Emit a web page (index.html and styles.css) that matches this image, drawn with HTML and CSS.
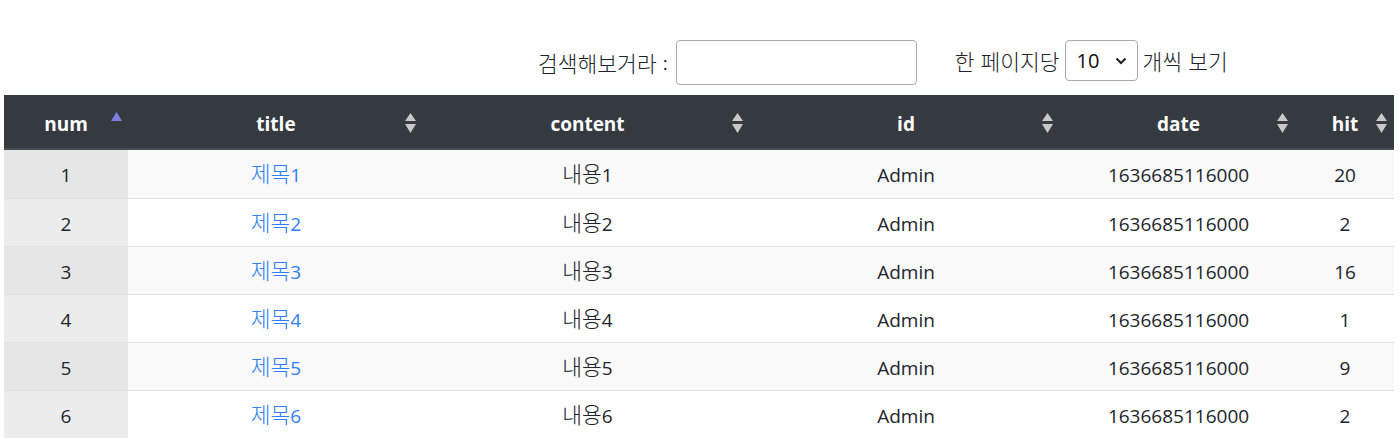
FILE: index.html
```html
<!DOCTYPE html>
<html lang="ko">
<head>
<meta charset="utf-8">
<title>게시판</title>
<link rel="stylesheet" href="styles.css">
</head>
<body>
<div class="page">
  <div class="controls">
    <label class="filter"><span class="ko">검색해보거라</span> : <input type="search" class="search-input"></label>
    <label class="length"><span class="ko">한 페이지당</span>
      <span class="select-box">10<svg class="chev" width="12" height="8" viewBox="0 0 12 8"><path d="M1.5 1.5 L6 6 L10.5 1.5" fill="none" stroke="#222" stroke-width="2"/></svg></span>
      <span class="ko">개씩 보기</span></label>
  </div>
  <table class="board">
    <colgroup>
      <col class="c-num"><col class="c-title"><col class="c-content"><col class="c-id"><col class="c-date"><col class="c-hit">
    </colgroup>
    <thead>
      <tr>
        <th class="asc">num<svg class="sort" width="11" height="20" viewBox="0 0 11 20"><polygon points="5.5,0 11,9 0,9" fill="#7b80dc"/></svg></th>
        <th>title<svg class="sort" width="11" height="21" viewBox="0 0 11 21"><polygon points="5.5,0 11,8 0,8" fill="#c8c8c8"/><polygon points="0,11 11,11 5.5,20" fill="#c8c8c8"/></svg></th>
        <th>content<svg class="sort" width="11" height="21" viewBox="0 0 11 21"><polygon points="5.5,0 11,8 0,8" fill="#c8c8c8"/><polygon points="0,11 11,11 5.5,20" fill="#c8c8c8"/></svg></th>
        <th>id<svg class="sort" width="11" height="21" viewBox="0 0 11 21"><polygon points="5.5,0 11,8 0,8" fill="#c8c8c8"/><polygon points="0,11 11,11 5.5,20" fill="#c8c8c8"/></svg></th>
        <th>date<svg class="sort" width="11" height="21" viewBox="0 0 11 21"><polygon points="5.5,0 11,8 0,8" fill="#c8c8c8"/><polygon points="0,11 11,11 5.5,20" fill="#c8c8c8"/></svg></th>
        <th>hit<svg class="sort" width="11" height="21" viewBox="0 0 11 21"><polygon points="5.5,0 11,8 0,8" fill="#c8c8c8"/><polygon points="0,11 11,11 5.5,20" fill="#c8c8c8"/></svg></th>
      </tr>
    </thead>
    <tbody>
      <tr><td class="sorted">1</td><td><a href="#"><span class="ko">제목</span>1</a></td><td><span class="ko">내용</span>1</td><td>Admin</td><td>1636685116000</td><td>20</td></tr>
      <tr><td class="sorted">2</td><td><a href="#"><span class="ko">제목</span>2</a></td><td><span class="ko">내용</span>2</td><td>Admin</td><td>1636685116000</td><td>2</td></tr>
      <tr><td class="sorted">3</td><td><a href="#"><span class="ko">제목</span>3</a></td><td><span class="ko">내용</span>3</td><td>Admin</td><td>1636685116000</td><td>16</td></tr>
      <tr><td class="sorted">4</td><td><a href="#"><span class="ko">제목</span>4</a></td><td><span class="ko">내용</span>4</td><td>Admin</td><td>1636685116000</td><td>1</td></tr>
      <tr><td class="sorted">5</td><td><a href="#"><span class="ko">제목</span>5</a></td><td><span class="ko">내용</span>5</td><td>Admin</td><td>1636685116000</td><td>9</td></tr>
      <tr><td class="sorted">6</td><td><a href="#"><span class="ko">제목</span>6</a></td><td><span class="ko">내용</span>6</td><td>Admin</td><td>1636685116000</td><td>2</td></tr>
    </tbody>
  </table>
</div>
</body>
</html>
```
FILE: styles.css
```css
html, body {
  margin: 0;
  padding: 0;
  background: #fff;
}
body {
  font-family: "Open Sans", "Noto Sans CJK KR", sans-serif;
  font-size: 19px;
  color: #212529;
}
.ko {
  font-family: "Noto Sans CJK KR", sans-serif;
  font-size: 21.5px;
  font-weight: 300;
  line-height: 1;
}
.page {
  padding: 40px 5px 0 4px;
}
.controls {
  display: flex;
  align-items: flex-start;
  padding-left: 534px;
  gap: 38px;
  height: 55px;
}
.filter, .length {
  display: flex;
  align-items: center;
  font-size: 19px;
  white-space: nowrap;
}
.filter { height: 45px; gap: 6px; }
.length { gap: 5px; height: 41px; }
.search-input {
  box-sizing: border-box;
  width: 241px;
  height: 45px;
  border: 1px solid #aaa;
  border-radius: 4px;
  margin: 0 0 0 2px;
  font: inherit;
  padding: 0 8px;
}
.select-box {
  box-sizing: border-box;
  width: 73px;
  height: 41px;
  border: 1px solid #aaa;
  border-radius: 4px;
  display: flex;
  align-items: center;
  justify-content: space-between;
  padding: 0 10px 0 11px;
  font-size: 20px;
  color: #111;
}
.chev { display: block; }

.board {
  width: 1390px;
  border-collapse: collapse;
  table-layout: fixed;
}
.c-num { width: 124px; }
.c-title { width: 296px; }
.c-content { width: 327px; }
.c-id { width: 310px; }
.c-date { width: 235px; }
.c-hit { width: 98px; }

.board th {
  position: relative;
  background: #343a40;
  color: #fff;
  font-weight: 700;
  font-size: 19px;
  line-height: 28px;
  padding: 15px 10px 10px;
  border-bottom: 2px solid #454d55;
  text-align: center;
}
.sort {
  position: absolute;
  right: 8px;
  top: 18px;
}
th.asc .sort { right: 6px; top: 17px; }
th:last-child .sort { right: 7px; }

.board td {
  text-align: center;
  line-height: 27px;
  padding: 12px 10px 8px;
  border-top: 1px solid #dee2e6;
  font-size: 19px;
}
.board tbody tr:first-child td { border-top: none; padding-top: 12px; padding-bottom: 9px; }
.board tbody tr:nth-child(odd) td { background: #f9f9f9; }
.board tbody tr:nth-child(odd) td.sorted { background: #e6e6e6; }
.board tbody tr:nth-child(even) td.sorted { background: #ececec; }
.board a {
  color: #2d7ff9;
  text-decoration: none;
}
```
